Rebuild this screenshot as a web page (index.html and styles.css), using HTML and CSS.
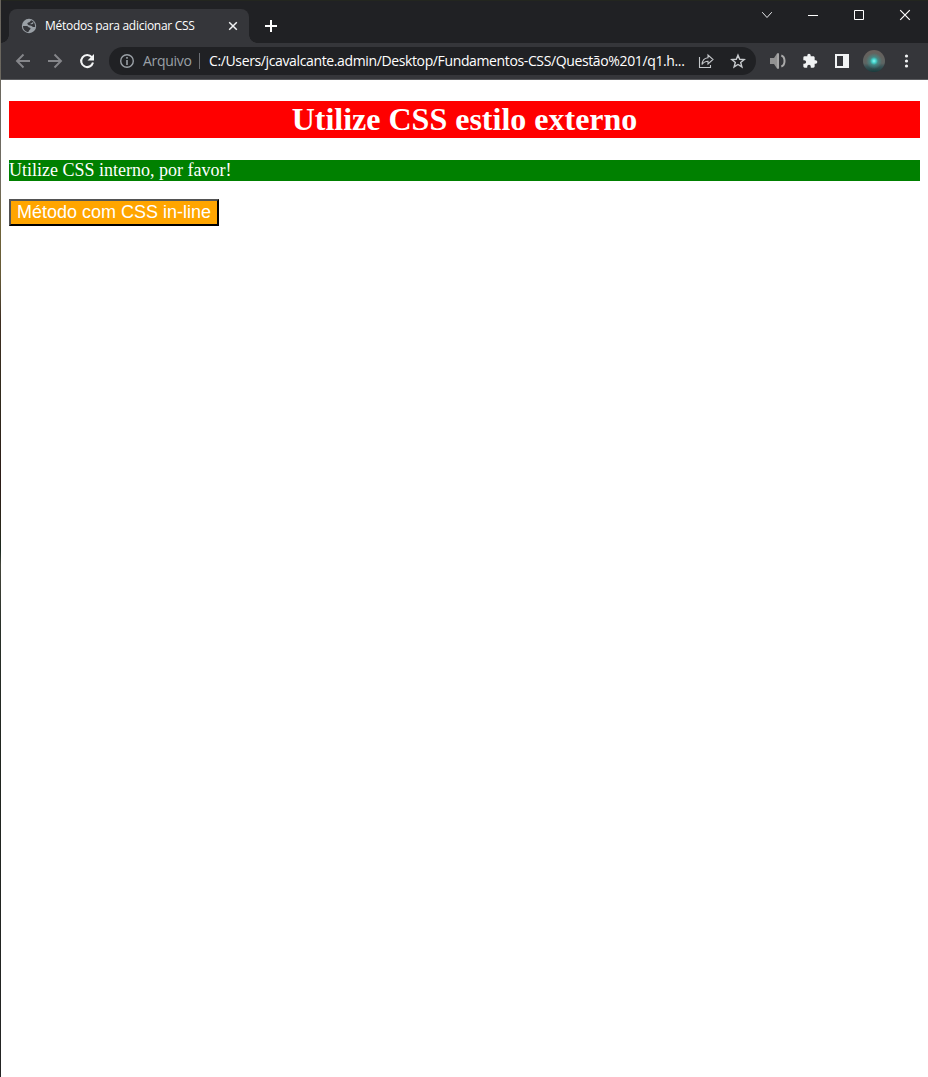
FILE: index.html
```html
<!DOCTYPE html>
<html lang="pt-BR">
<head>
<meta charset="utf-8">
<title>Métodos para adicionar CSS</title>
<link rel="stylesheet" href="styles.css">
</head>
<body>
<div class="desktop">
<div class="window">
  <div class="tabstrip">
    <div class="tab">
      <svg class="globe" width="16" height="16" viewBox="0 0 16 16"><circle cx="8" cy="8" r="7.2" fill="#9aa0a6"/><path d="M10.200 2.200C9 3 8.800 4.400 7.300 4.600 5.800 5 6.200 6.800 7.800 7.200l2.200.6c1 .3 1.300 1.200 2.300 1.200h1.900C14 4.800 12.600 2.800 10.200 2.200ZM2 8h3.800c1.500 0 1.300 1.400 2.500 1.600 1.500.2 1.700 1.500.5 2.200-.8.5-.8 1.300-1.400 2.300C4.500 13.900 2 11.600 2 8Z" fill="#35363a"/><path d="M12.200 4.200c-.5 1.300-1.600 1.600-2.600 1.500" fill="none" stroke="#9aa0a6" stroke-width="1.100"/></svg>
      <span class="tab-title">Métodos para adicionar CSS</span>
      <svg class="tab-close" width="10" height="10" viewBox="0 0 10 10"><path d="m1.200 1.200 7.600 7.600m0-7.600L1.200 8.800" stroke="#f1f3f4" stroke-width="1.500"/></svg>
    </div>
    <svg class="plus" width="12" height="12" viewBox="0 0 12 12"><path d="M6 0v12M0 6h12" stroke="#fff" stroke-width="2"/></svg>
    <div class="controls">
      <svg width="46" height="30" viewBox="0 0 46 30"><path d="m18.200 12.200 4.800 5.300 4.800-5.300" fill="none" stroke="#e8eaed"/></svg>
      <svg width="46" height="30" viewBox="0 0 46 30"><path d="M18 15.500h10" stroke="#fff"/></svg>
      <svg width="46" height="30" viewBox="0 0 46 30"><path d="M18.500 10.500h9v9h-9z" fill="none" stroke="#fff"/></svg>
      <svg width="46" height="30" viewBox="0 0 46 30"><path d="m18.200 10.200 9.600 9.600m0-9.600-9.600 9.600" stroke="#fff" stroke-width="1.200"/></svg>
    </div>
  </div>
  <div class="toolbar">
    <svg class="nav" width="16" height="16" viewBox="0 0 16 16"><path d="M15 8H2m6.500-6.500L2 8l6.500 6.500" fill="none" stroke="#85868a" stroke-width="1.900"/></svg>
    <svg class="nav" width="16" height="16" viewBox="0 0 16 16"><path d="M1 8h13M7.500 1.500 14 8l-6.500 6.500" fill="none" stroke="#85868a" stroke-width="1.900"/></svg>
    <svg class="nav" width="16" height="16" viewBox="0 0 16 16"><path d="M12.800 4.200A6 6 0 1 0 14 9.600" fill="none" stroke="#f4f5f6" stroke-width="2.100"/><path d="M15 1v6.500H8.500Z" fill="#f4f5f6"/></svg>
    <div class="omnibox">
      <svg width="16" height="16" viewBox="0 0 16 16"><circle cx="8" cy="8" r="6.300" fill="none" stroke="#9aa0a6" stroke-width="1.400"/><path d="M8 4v1.700M8 7v5" stroke="#9aa0a6" stroke-width="1.600"/></svg>
      <span class="scheme">Arquivo</span>
      <span class="divider"></span>
      <span class="url">C:/Users/jcavalcante.admin/Desktop/Fundamentos-CSS/Questão%201/q1.h...</span>
      <svg class="share" width="16" height="16" viewBox="0 0 16 16"><path d="M1.500 4v10.500h11V12M4 11.500C4.300 7.500 6.300 5 10 4.700V2l5 4.500-5 4.500V8.200C7.500 8.200 5.500 9.200 4 11.500Z" fill="none" stroke="#c4c7ca" stroke-width="1.100"/></svg>
      <svg class="star" width="16" height="16" viewBox="0 0 16 16"><path d="m8 2.200 1.700 4.100 4.500.3-3.500 2.900 1.200 4.400L8 11.500l-3.900 2.400 1.200-4.400-3.500-2.900 4.500-.3Z" fill="none" stroke="#c8cbce" stroke-width="1.400"/></svg>
    </div>
    <div class="extensions">
      <svg width="16" height="16" viewBox="0 0 16 16"><path d="M0 5h4l3-4.500h2v15H7L4 11H0Z" fill="#929292"/><path d="M7 .5h2v15H7Z" fill="#a6a6a6"/><path d="M11.300 2.500c4.300 1.500 4.300 9.500 0 11" fill="none" stroke="#aaa" stroke-width="2"/></svg>
      <svg width="16" height="16" viewBox="0 0 24 24"><path d="M20.500 11H19V7c0-1.100-.9-2-2-2h-4V3.500a2.500 2.500 0 0 0-5 0V5H4a2 2 0 0 0-2 2v3.800h1.500a2.700 2.700 0 0 1 0 5.400H2V20c0 1.100.9 2 2 2h3.800v-1.500a2.700 2.700 0 0 1 5.400 0V22H17c1.100 0 2-.9 2-2v-4h1.500a2.500 2.500 0 0 0 0-5Z" fill="#f1f3f4"/></svg>
      <svg width="16" height="16" viewBox="0 0 16 16"><path d="M1 1h14v14H1Zm2 2v10h6V3Z" fill="#f1f3f4" fill-rule="evenodd"/></svg>
      <span class="avatar"></span>
      <svg width="16" height="16" viewBox="0 0 16 16" fill="#f1f3f4"><circle cx="8.500" cy="3" r="1.600"/><circle cx="8.500" cy="8" r="1.600"/><circle cx="8.500" cy="13" r="1.600"/></svg>
    </div>
  </div>
  <main class="page">
    <h1 class="heading">Utilize CSS estilo externo</h1>
    <p class="notice">Utilize CSS interno, por favor!</p>
    <button class="action">Método com CSS in-line</button>
  </main>
</div>
</div>
</body>
</html>
```
FILE: styles.css
```css
body { margin: 0; }
* { box-sizing: border-box; }
.desktop {
  height: 1077px;
  padding-left: 1px;
  overflow: hidden;
  background: linear-gradient(#69655d 0, #706c62 180px, #71663a 220px, #655936 275px, #50452f 300px, #3e2d20 320px, #302a1c 400px, #2c1b16 480px, #292719 530px, #19291f 550px, #45463b 565px, #293029 625px, #20251f 760px, #242424 1077px);
}
.window { height: 100%; background: #fff; }
svg { display: block; flex: none; }
.tabstrip {
  display: flex;
  height: 43px;
  padding-left: 8px;
  background: #202124;
  border-top: 1px solid #23261f;
}
.tab {
  position: relative;
  display: flex;
  align-items: center;
  width: 240px;
  height: 34px;
  margin-top: 8px;
  padding: 0 11px 0 12px;
  border-radius: 8px 8px 0 0;
  background: #35363a;
}
.tab::before, .tab::after {
  content: "";
  position: absolute;
  bottom: 0;
  width: 8px;
  height: 8px;
}
.tab::before { left: -8px; background: radial-gradient(circle at 0 0, transparent 7.5px, #35363a 8px); }
.tab::after { right: -8px; background: radial-gradient(circle at 100% 0, transparent 7.5px, #35363a 8px); }
.tab-title {
  margin-left: 8px;
  font: 12px/16px "Open Sans", "Noto Sans", sans-serif;
  letter-spacing: -0.28px;
  white-space: nowrap;
  color: #fff;
}
.tab-close { margin-left: auto; }
.plus { margin: 19px 0 0 16px; }
.controls { display: flex; margin: -1px 0 0 auto; }
.toolbar {
  display: flex;
  align-items: center;
  height: 37px;
  padding: 0 13px 0 14px;
  background: #35363a;
  border-bottom: 1px solid #5b5c5f;
}
.nav { margin-right: 16px; }
.omnibox {
  display: flex;
  align-items: center;
  width: 647px;
  height: 28px;
  margin-left: -2px;
  padding: 0 10px;
  border-radius: 14px;
  background: #202124;
  font: 14px/20px "Open Sans", "Noto Sans", sans-serif;
  white-space: nowrap;
}
.scheme { width: 56px; padding-left: 8px; color: #9aa0a6; letter-spacing: -0.3px; }
.divider { width: 1px; height: 16px; margin: 0 9px 0 8px; background: #6b6e73; }
.url { width: 489px; color: #fff; letter-spacing: -0.37px; }
.share { margin-right: 16px; }
.extensions { display: flex; align-items: center; gap: 16px; margin-left: 14px; }
.avatar {
  width: 22px;
  height: 22px;
  margin: 0 -3px;
  border-radius: 50%;
  background:
    radial-gradient(circle at 50% 50%, #8ff5f2 0, #43d3cc 2px, rgba(62, 150, 146, .7) 4px, transparent 8px),
    linear-gradient(#68605b, #5e6563 60%, #3b5558 75%, #183b3c);
}
.page { display: flow-root; padding: 0 8px; }
.heading {
  height: 37px;
  margin: 21px 0 22px;
  background: red;
  color: #fff;
  font: bold 32px/37px "Liberation Serif", serif;
  text-align: center;
}
.notice {
  height: 21px;
  margin: 0 0 18px;
  background: green;
  color: #fff;
  font: 18px/21px "Liberation Serif", serif;
}
.action {
  display: block;
  width: 210px;
  height: 27px;
  padding: 0;
  border: 2px outset #000;
  background: orange;
  color: #fff;
  font: 18px/21px "Liberation Sans", sans-serif;
  white-space: nowrap;
}
```
